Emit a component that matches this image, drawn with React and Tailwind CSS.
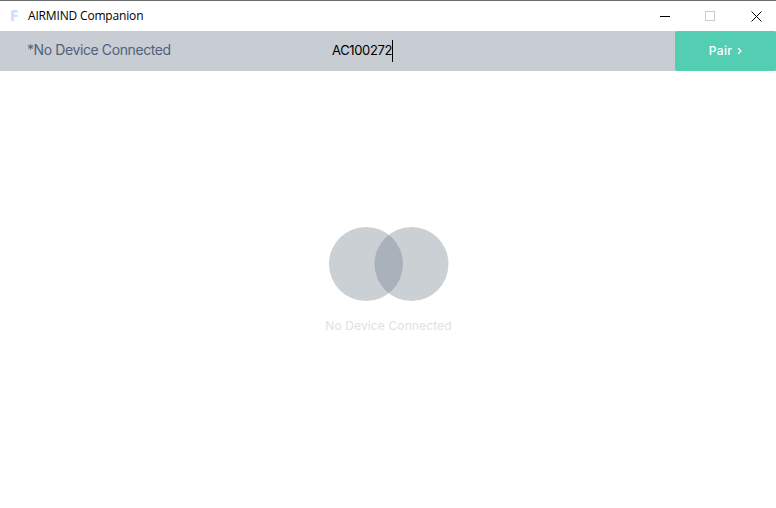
import React from "react";

function AppIcon() {
  return (
    <svg width="10" height="14" viewBox="0 0 10 14" className="shrink-0">
      <path d="M1 2 Q1 1 2 1 H8 V3.5 H4 V5.5 H7.5 V8 H4 V12 L2.5 12.5 Q1 12 1 11 Z" fill="#d3e0fb" />
    </svg>
  );
}

export default function App() {
  return (
    <div className="w-[776px] h-[508px] bg-white flex flex-col overflow-hidden">
      <div className="h-[1px] bg-[#6b6b6b]" />
      <div className="h-[30px] flex items-center bg-white">
        <div className="w-[28px] flex justify-end pr-[8px]">
          <AppIcon />
        </div>
        <span className="text-[12px] tracking-[-0.17px] text-black font-['Open_Sans',sans-serif]">AIRMIND Companion</span>
        <div className="ml-auto flex items-center">
          <div className="w-[44px] h-[30px] flex items-center justify-center">
            <svg width="10" height="1"><rect width="10" height="1" fill="#000" /></svg>
          </div>
          <div className="w-[46px] h-[30px] mr-[3px] flex items-center justify-center">
            <svg width="10" height="10"><rect x="0.5" y="0.5" width="9" height="9" fill="none" stroke="#cccccc" /></svg>
          </div>
          <div className="w-[40px] h-[30px] flex items-center justify-center">
            <svg width="11" height="11"><path d="M0.5 0.5 L10.5 10.5 M10.5 0.5 L0.5 10.5" stroke="#000" strokeWidth="1" /></svg>
          </div>
        </div>
      </div>
      <div className="h-[40px] bg-[#c8ccd3] flex items-center">
        <div className="w-[332px] pl-[27px] pb-[3px] text-[14px] tracking-[-0.4px] text-[#53607c] font-['Inter',sans-serif]">*No Device Connected</div>
        <div className="flex-1 flex items-center font-['Inter',sans-serif] text-[13px] tracking-[-0.35px] text-black">
          <span>AC100272</span>
          <span className="w-[1px] h-[22px] bg-black" />
        </div>
        <div className="w-[101px] h-full bg-[#54ceb3] rounded-[2px] flex items-center justify-center gap-[5px] text-white text-[12px] tracking-[0.4px] font-medium font-['Inter',sans-serif]">
          <span>Pair</span>
          <svg width="5" height="8" viewBox="0 0 5 8"><path d="M1 1 L4 4 L1 7" fill="none" stroke="#fff" strokeWidth="1.2" /></svg>
        </div>
      </div>
      <div className="flex-1 flex flex-col items-center pt-[155px]">
        <svg width="121" height="76" viewBox="0 0 121 76" className="ml-[1px]">
          <defs>
            <clipPath id="leftC"><circle cx="38" cy="38" r="37" /></clipPath>
          </defs>
          <circle cx="38" cy="38" r="37" fill="#cbd0d4" />
          <circle cx="83.5" cy="38" r="37" fill="#cbd0d4" />
          <circle cx="83.5" cy="38" r="37" fill="#a9b1ba" clipPath="url(#leftC)" />
        </svg>
        <div className="mt-[15px] ml-[1px] text-[12px] tracking-[0.12px] text-[#dfe1e5] font-['Inter',sans-serif]">No Device Connected</div>
      </div>
    </div>
  );
}
